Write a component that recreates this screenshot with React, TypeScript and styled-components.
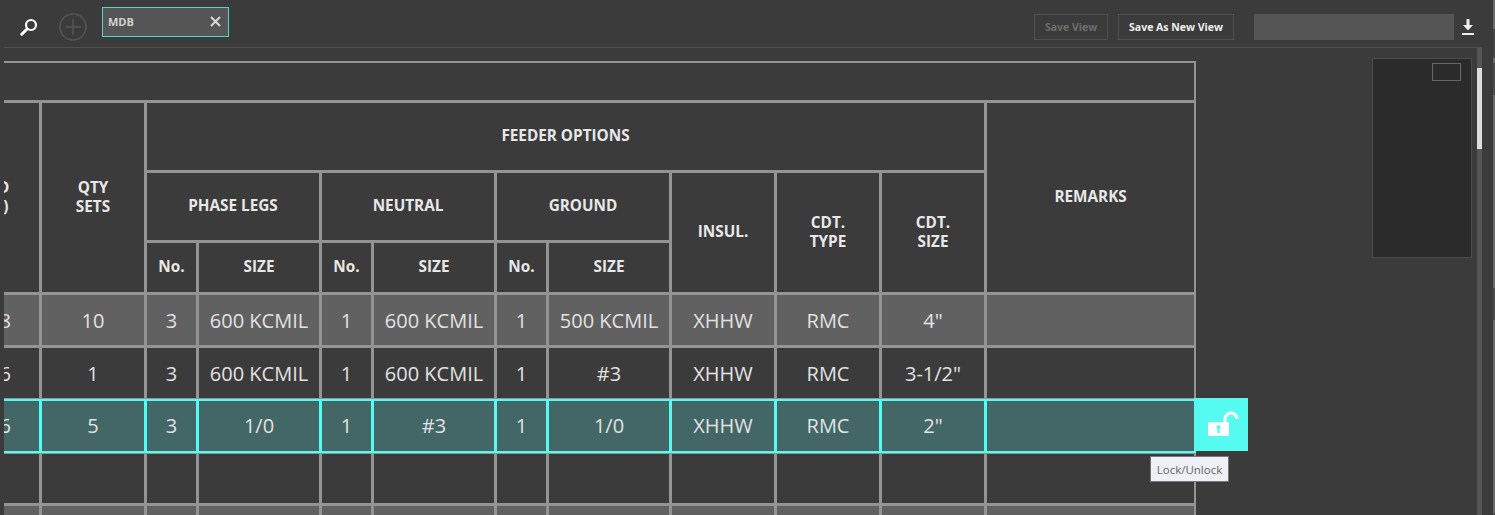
import styled, { createGlobalStyle } from "styled-components";

const GlobalStyle = createGlobalStyle`
  html, body {
    margin: 0;
    height: 100%;
    overflow: hidden;
    background: #3b3b3b;
  }
  #root {
    height: 100%;
  }
`;

const Page = styled.div`
  display: flex;
  height: 515px;
  background: #3b3b3b;
  font-family: "Open Sans", "Noto Sans", sans-serif;
  color: #e6e6e6;
`;

const Content = styled.div`
  display: flex;
  flex-direction: column;
  flex: 1;
  min-width: 0;
`;

const OuterScrollbar = styled.div`
  width: 2px;
  background: linear-gradient(
    #6a6a6a 0 29px,
    #454545 29px 58px,
    #6a6a6a 58px 63px,
    #4c4c4c 63px 95px,
    #6a6a6a 95px 288px,
    #4c4c4c 288px 320px,
    #6a6a6a 320px 513px,
    #4c4c4c 513px
  );
`;

const Toolbar = styled.div`
  display: flex;
  align-items: center;
  box-sizing: border-box;
  height: 47px;
  padding: 7px 19px 0 20px;
`;

const IconButton = styled.button`
  display: flex;
  align-items: center;
  justify-content: center;
  padding: 0;
  border: 0;
  background: none;
`;

const AddButton = styled(IconButton)`
  margin-left: 21px;
`;

const Tag = styled.div`
  display: flex;
  align-self: flex-start;
  align-items: center;
  justify-content: space-between;
  box-sizing: border-box;
  width: 127px;
  height: 30px;
  margin-left: 15px;
  padding: 0 7px 2px 5px;
  background: #555;
  border: 1px solid #4fd8cf;
  font-size: 11px;
  font-weight: 700;
  color: #d0d0d0;
`;

const ViewButton = styled.button<{ $disabled?: boolean }>`
  box-sizing: border-box;
  height: 26px;
  padding: 0;
  width: ${(p) => (p.$disabled ? "74px" : "116px")};
  margin-left: ${(p) => (p.$disabled ? "auto" : "10px")};
  background: none;
  border: 1px solid #505050;
  font-family: inherit;
  font-size: 10.5px;
  font-weight: 700;
  color: ${(p) => (p.$disabled ? "#6e6e6e" : "#f0f0f0")};
`;

const ViewInput = styled.div`
  width: 200px;
  height: 26px;
  margin-left: 20px;
  background: #555;
`;

const DownloadButton = styled(IconButton)`
  margin-left: 8px;
`;

const Main = styled.div`
  position: relative;
  display: flex;
  flex: 1;
  min-height: 0;
  margin: 0 11px 0 4px;
  border-top: 1px solid #505050;
`;

const TableScroll = styled.div`
  position: relative;
  flex: 1;
  min-width: 0;
  padding-top: 13px;
  overflow: hidden;
`;

const Grid = styled.table`
  width: 1259px;
  margin-left: -67px;
  table-layout: fixed;
  border-collapse: separate;
  border-spacing: 0;
  border-top: 2px solid #949494;
`;

const Cell = styled.td<{ $end?: boolean }>`
  box-sizing: border-box;
  padding: 0;
  text-align: center;
  border-right: ${(p) => (p.$end ? "2px" : "3px")} solid #949494;
  border-bottom: 3px solid #949494;
`;

const HeadCell = styled(Cell).attrs({ as: "th" })`
  padding-bottom: 2px;
  font-size: 15.3px;
  line-height: 19px;
  font-weight: 700;
  color: #e8e8e8;
`;

const HeadRow = styled.tr<{ $height: number }>`
  height: ${(p) => p.$height}px;
`;

const DataRow = styled.tr<{ $kind?: "shaded" | "selected" | "afterSelected" }>`
  height: ${(p) => (p.$kind === "selected" ? 52 : 53)}px;

  td {
    font-size: 20px;
    font-weight: 400;
    white-space: nowrap;
    color: #e2e2e2;
    background: ${(p) =>
      p.$kind === "shaded" ? "#616161" : p.$kind === "selected" ? "#436766" : "transparent"};
    ${(p) =>
      p.$kind === "selected"
        ? `
      padding-bottom: 2px;
      border-right-color: #55fbf0;
      border-bottom: 2px solid #55fbf0;
      box-shadow: 0 -2px 0 #55fbf0;
    `
        : ""}
    ${(p) => (p.$kind === "afterSelected" ? "border-top: 1px solid #949494;" : "")}
  }
`;

const LockButton = styled.button`
  position: absolute;
  top: 350px;
  left: 1190px;
  display: flex;
  align-items: center;
  justify-content: center;
  width: 54px;
  height: 53px;
  padding: 0 0 2px 4px;
  border: 0;
  background: #55fbf0;
`;

const Tooltip = styled.div`
  position: absolute;
  top: 408px;
  left: 1146px;
  box-sizing: border-box;
  display: flex;
  align-items: center;
  justify-content: center;
  width: 79px;
  height: 26px;
  background: #eff0f6;
  border: 1px solid #777;
  font-size: 11.5px;
  color: #666;
`;

const Minimap = styled.div`
  position: absolute;
  top: 10px;
  left: 1368px;
  box-sizing: border-box;
  width: 100px;
  height: 200px;
  background: #2b2b2b;
  border: 1px solid #4c4c4c;
`;

const MinimapViewport = styled.div`
  box-sizing: border-box;
  width: 29px;
  height: 18px;
  margin: 4px 0 0 59px;
  border: 1px solid #666;
`;

const ScrollTrack = styled.div`
  width: 5px;
  margin-left: auto;
  padding-top: 20px;
  background: #555;
`;

const ScrollThumb = styled.div`
  height: 81px;
  background: #dedede;
`;

const SearchIcon = () => (
  <svg width="18" height="18" viewBox="0 0 18 18" fill="none" stroke="#fff">
    <circle cx="11" cy="7" r="5" strokeWidth="2.2" />
    <path d="M7 11 1.8 16.2" strokeWidth="3" strokeLinecap="round" />
  </svg>
);

const PlusIcon = () => (
  <svg width="28" height="28" viewBox="0 0 28 28" fill="none" stroke="#555" strokeWidth="1.5">
    <circle cx="14" cy="14" r="13" />
    <path d="M14 6v16M6 14h16" />
  </svg>
);

const CloseIcon = () => (
  <svg width="11" height="11" viewBox="0 0 11 11" stroke="#d8d8d8" strokeWidth="2">
    <path d="M1 1l9 9M10 1l-9 9" />
  </svg>
);

const DownloadIcon = () => (
  <svg width="12" height="16" viewBox="0 0 12 16" fill="#eee">
    <path d="M4.5 0h3v6H11L6 11.5 1 6h3.5z" />
    <rect y="14" width="12" height="2" />
  </svg>
);

const LockIcon = () => (
  <svg width="32" height="26" viewBox="0 0 32 26">
    <path d="M18 11V8a6 6 0 0 1 12 0" fill="none" stroke="#fff" strokeWidth="3.2" />
    <rect x="1" y="11" width="21" height="14" fill="#fff" />
    <circle cx="11.5" cy="16" r="2" fill="#55fbf0" />
    <rect x="10.3" y="16" width="2.4" height="6" fill="#55fbf0" />
  </svg>
);

const columnWidths = [105, 105, 52, 123, 52, 123, 52, 123, 105, 105, 105, 209];

type Wire = {
  lead: string;
  qty: string;
  phaseNo: string;
  phaseSize: string;
  neutralNo: string;
  neutralSize: string;
  groundNo: string;
  groundSize: string;
  insul: string;
  type: string;
  size: string;
};

const rows: { wire?: Wire; kind?: "shaded" | "selected" | "afterSelected" }[] = [
  {
    kind: "shaded",
    wire: {
      lead: "4018",
      qty: "10",
      phaseNo: "3",
      phaseSize: "600 KCMIL",
      neutralNo: "1",
      neutralSize: "600 KCMIL",
      groundNo: "1",
      groundSize: "500 KCMIL",
      insul: "XHHW",
      type: "RMC",
      size: '4"',
    },
  },
  {
    wire: {
      lead: "4016",
      qty: "1",
      phaseNo: "3",
      phaseSize: "600 KCMIL",
      neutralNo: "1",
      neutralSize: "600 KCMIL",
      groundNo: "1",
      groundSize: "#3",
      insul: "XHHW",
      type: "RMC",
      size: '3-1/2"',
    },
  },
  {
    kind: "selected",
    wire: {
      lead: "4016",
      qty: "5",
      phaseNo: "3",
      phaseSize: "1/0",
      neutralNo: "1",
      neutralSize: "#3",
      groundNo: "1",
      groundSize: "1/0",
      insul: "XHHW",
      type: "RMC",
      size: '2"',
    },
  },
  { kind: "afterSelected" },
  { kind: "shaded" },
];

function App() {
  return (
    <Page>
      <GlobalStyle />
      <Content>
        <Toolbar>
          <IconButton>
            <SearchIcon />
          </IconButton>
          <AddButton>
            <PlusIcon />
          </AddButton>
          <Tag>
            MDB
            <CloseIcon />
          </Tag>
          <ViewButton $disabled>Save View</ViewButton>
          <ViewButton>Save As New View</ViewButton>
          <ViewInput />
          <DownloadButton>
            <DownloadIcon />
          </DownloadButton>
        </Toolbar>
        <Main>
          <TableScroll>
            <Grid>
              <colgroup>
                {columnWidths.map((w, i) => (
                  <col key={i} width={w} />
                ))}
              </colgroup>
              <thead>
                <HeadRow $height={40}>
                  <HeadCell colSpan={12} $end />
                </HeadRow>
                <HeadRow $height={70}>
                  <HeadCell rowSpan={3}>
                    LOAD
                    <br />
                    (KVA)
                  </HeadCell>
                  <HeadCell rowSpan={3}>
                    QTY
                    <br />
                    SETS
                  </HeadCell>
                  <HeadCell colSpan={9}>FEEDER OPTIONS</HeadCell>
                  <HeadCell rowSpan={3} $end>
                    REMARKS
                  </HeadCell>
                </HeadRow>
                <HeadRow $height={70}>
                  <HeadCell colSpan={2}>PHASE LEGS</HeadCell>
                  <HeadCell colSpan={2}>NEUTRAL</HeadCell>
                  <HeadCell colSpan={2}>GROUND</HeadCell>
                  <HeadCell rowSpan={2}>INSUL.</HeadCell>
                  <HeadCell rowSpan={2}>
                    CDT.
                    <br />
                    TYPE
                  </HeadCell>
                  <HeadCell rowSpan={2}>
                    CDT.
                    <br />
                    SIZE
                  </HeadCell>
                </HeadRow>
                <HeadRow $height={52}>
                  <HeadCell>No.</HeadCell>
                  <HeadCell>SIZE</HeadCell>
                  <HeadCell>No.</HeadCell>
                  <HeadCell>SIZE</HeadCell>
                  <HeadCell>No.</HeadCell>
                  <HeadCell>SIZE</HeadCell>
                </HeadRow>
              </thead>
              <tbody>
                {rows.map((row, i) => (
                  <DataRow key={i} $kind={row.kind}>
                    <Cell>{row.wire?.lead}</Cell>
                    <Cell>{row.wire?.qty}</Cell>
                    <Cell>{row.wire?.phaseNo}</Cell>
                    <Cell>{row.wire?.phaseSize}</Cell>
                    <Cell>{row.wire?.neutralNo}</Cell>
                    <Cell>{row.wire?.neutralSize}</Cell>
                    <Cell>{row.wire?.groundNo}</Cell>
                    <Cell>{row.wire?.groundSize}</Cell>
                    <Cell>{row.wire?.insul}</Cell>
                    <Cell>{row.wire?.type}</Cell>
                    <Cell>{row.wire?.size}</Cell>
                    <Cell $end />
                  </DataRow>
                ))}
              </tbody>
            </Grid>
            <LockButton>
              <LockIcon />
            </LockButton>
            <Tooltip>Lock/Unlock</Tooltip>
          </TableScroll>
          <Minimap>
            <MinimapViewport />
          </Minimap>
          <ScrollTrack>
            <ScrollThumb />
          </ScrollTrack>
        </Main>
      </Content>
      <OuterScrollbar />
    </Page>
  );
}

export default App;
